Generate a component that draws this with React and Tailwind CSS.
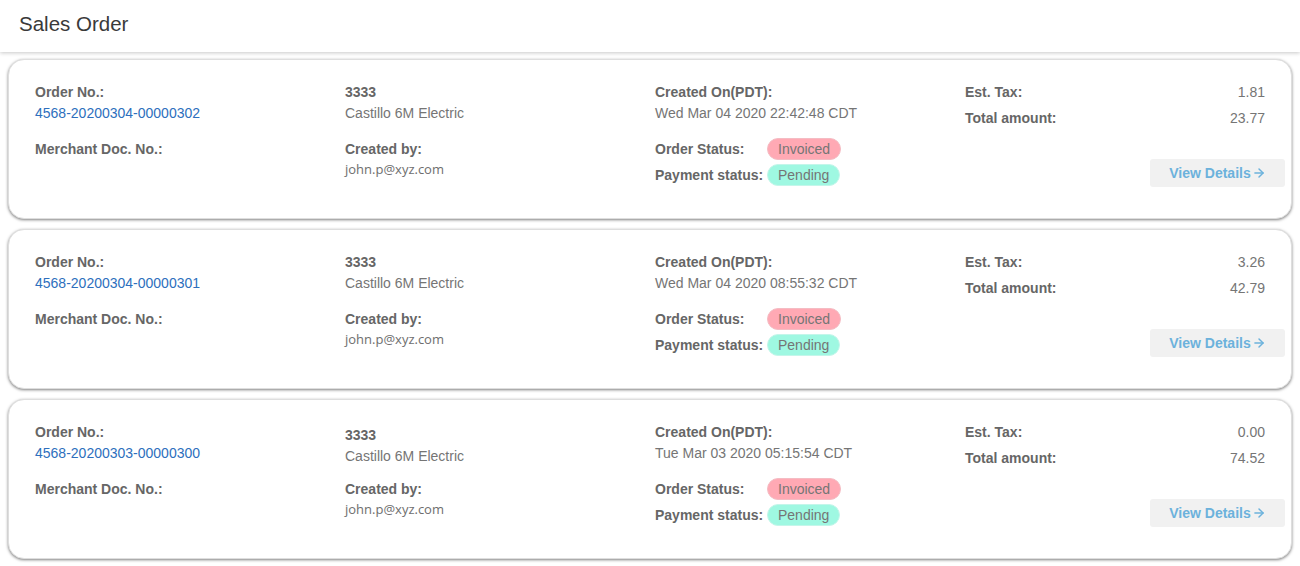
import { ArrowRight } from 'lucide-react';

const orders = [
  {
    no: '4568-20200304-00000302',
    created: 'Wed Mar 04 2020 22:42:48 CDT',
    tax: '1.81',
    total: '23.77',
  },
  {
    no: '4568-20200304-00000301',
    created: 'Wed Mar 04 2020 08:55:32 CDT',
    tax: '3.26',
    total: '42.79',
  },
  {
    no: '4568-20200303-00000300',
    created: 'Tue Mar 03 2020 05:15:54 CDT',
    tax: '0.00',
    total: '74.52',
    nudge: true,
  },
];

function Pill({ tone, children }) {
  const cls =
    tone === 'red'
      ? 'bg-[#ffa9b4] border-[#f4bcc3]'
      : 'bg-[#9ff8e2] border-[#c4f6ea]';
  return (
    <span className={`inline-flex h-[22px] items-center rounded-full border px-[10px] text-[14px] text-[#757575] ${cls}`}>
      {children}
    </span>
  );
}

function OrderCard({ order }) {
  return (
    <div className="mx-2 h-[160px] rounded-[16px] border border-[#dedede] bg-white pl-[26px] pr-[26px] pt-[22px] shadow-[0_1px_3px_rgba(0,0,0,0.5)]">
      <div className="grid grid-cols-[310px_310px_310px_1fr] leading-[21px]">
        <div>
          <div className="font-bold text-[#666]">Order No.:</div>
          <a className="text-[#2d6fbd]" href="#">{order.no}</a>
          <div className="mt-[15px] font-bold text-[#666]">Merchant Doc. No.:</div>
        </div>

        <div>
          <div className={order.nudge ? 'mt-[3px] mb-[-3px]' : ''}>
            <div className="font-bold text-[#666]">3333</div>
            <div className="text-[#757575]">Castillo 6M Electric</div>
          </div>
          <div className="mt-[15px] font-bold text-[#666]">Created by:</div>
          <div className="-mt-[1px] font-['Open_Sans',sans-serif] text-[13px] text-[#6e6e6e]">john.p@xyz.com</div>
        </div>

        <div>
          <div className="font-bold text-[#666]">Created On(PDT):</div>
          <div className="text-[#757575]">{order.created}</div>
          <div className="mt-[14px] grid grid-cols-[112px_auto] items-center gap-y-[4px] leading-[21px]">
            <span className="mt-[1px] font-bold text-[#666]">Order Status:</span>
            <span><Pill tone="red">Invoiced</Pill></span>
            <span className="font-bold text-[#666]">Payment status:</span>
            <span><Pill tone="green">Pending</Pill></span>
          </div>
        </div>

        <div className="flex flex-col">
          <div className="flex justify-between">
            <span className="font-bold text-[#666]">Est. Tax:</span>
            <span className="text-[#757575]">{order.tax}</span>
          </div>
          <div className="mt-[5px] flex justify-between">
            <span className="font-bold text-[#666]">Total amount:</span>
            <span className="text-[#757575]">{order.total}</span>
          </div>
          <button className="mr-[-20px] mt-[30px] flex h-[28px] w-[135px] items-center justify-center self-end rounded-[3px] bg-[#f1f1f1] text-[14px] font-bold text-[#6cb2dc]">
            View Details
            <ArrowRight size={14} strokeWidth={2.5} className="ml-[1px]" />
          </button>
        </div>
      </div>
    </div>
  );
}

export default function App() {
  return (
    <div className="min-h-[566px] bg-white font-['Liberation_Sans',Arial,sans-serif] text-[14px]">
      <header className="flex h-[52px] items-center px-[19px] pb-[4px] shadow-[0_1px_4px_rgba(0,0,0,0.22)]">
        <h1 className="text-[20.5px] text-[#3a3a3a]">Sales Order</h1>
      </header>
      <div className="flex flex-col gap-[10px] pt-[7px]">
        {orders.map((o) => (
          <OrderCard key={o.no} order={o} />
        ))}
      </div>
    </div>
  );
}
